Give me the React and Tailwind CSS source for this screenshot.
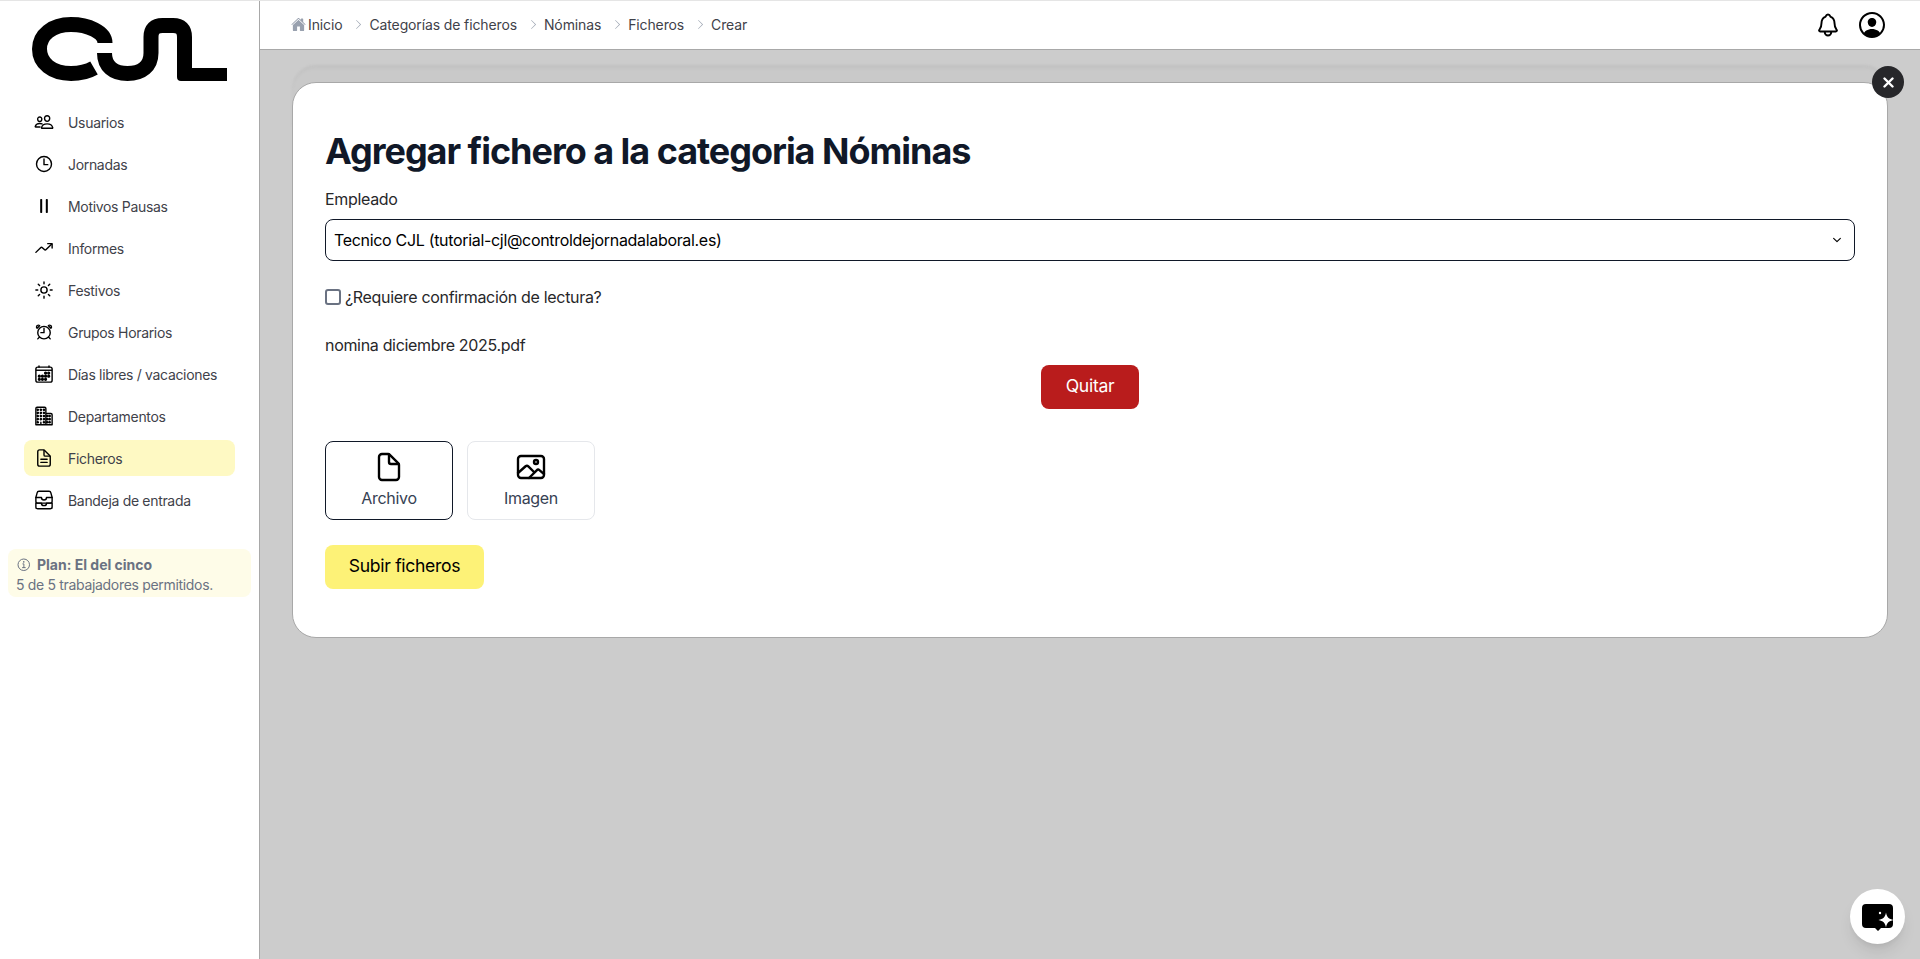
import React from 'react';
import {
  IoAlarmOutline,
  IoBusinessOutline,
  IoCalendarOutline,
  IoChevronDown,
  IoDocumentOutline,
  IoDocumentTextOutline,
  IoFileTrayStackedOutline,
  IoHome,
  IoImageOutline,
  IoInformationCircleOutline,
  IoNotificationsOutline,
  IoPauseOutline,
  IoPeopleOutline,
  IoPersonCircleOutline,
  IoSunnyOutline,
  IoTimeOutline,
  IoTrendingUpOutline,
} from 'react-icons/io5';
import { BsChevronRight } from 'react-icons/bs';

const navItems = [
  { label: 'Usuarios', icon: IoPeopleOutline },
  { label: 'Jornadas', icon: IoTimeOutline },
  { label: 'Motivos Pausas', icon: IoPauseOutline },
  { label: 'Informes', icon: IoTrendingUpOutline },
  { label: 'Festivos', icon: IoSunnyOutline },
  { label: 'Grupos Horarios', icon: IoAlarmOutline },
  { label: 'Días libres / vacaciones', icon: IoCalendarOutline },
  { label: 'Departamentos', icon: IoBusinessOutline },
  { label: 'Ficheros', icon: IoDocumentTextOutline, active: true },
  { label: 'Bandeja de entrada', icon: IoFileTrayStackedOutline },
];

const crumbs = ['Categorías de ficheros', 'Nóminas', 'Ficheros', 'Crear'];

// CJL logo
const Logo = () => (
  <svg width="195" height="65" viewBox="32 17 195 65" fill="none" stroke="#000" strokeWidth="15">
    <path d="M105 43 C105 32 88 24.500 71 24.500 C52 24.500 39.500 35 39.500 49 C39.500 63 52 73.500 71 73.500 C80 73.500 88 71.500 94 68" />
    <path
      d="M104.500 53 C104.500 66 113 73.500 127.500 73.500 C142 73.500 151 66 151 53 V37 Q151 25.500 162.500 25.500 H173 Q184.500 25.500 184.500 37 V60"
      strokeLinejoin="round"
    />
    <path d="M177 58 V77 Q177 81 181 81 H227 V68 H192 V58 Z" fill="#000" stroke="none" />
  </svg>
);

const Sidebar = () => (
  <aside className="w-[260px] shrink-0 bg-white border-r border-[#a8a8a8] flex flex-col">
    <div className="pl-[32px] pt-[16px] h-[100px]">
      <Logo />
    </div>
    <nav className="flex flex-col gap-[6px] pl-[24px] pr-[24px] pt-[3px]">
      {navItems.map(({ label, icon: Icon, active }) => (
        <div
          key={label}
          className={`h-[36px] flex items-center gap-[14px] pl-[10px] rounded-lg text-[14px] text-[#3f424a] ${
            active ? 'bg-[#fef9c3]' : ''
          }`}
        >
          <Icon className="w-[20px] h-[20px] text-black [&_*]:[stroke-width:36px]" />
          <span>{label}</span>
        </div>
      ))}
    </nav>
    <div className="mt-[31px] mx-[8px] w-[243px] h-[48px] rounded-lg bg-[#fefce8] px-[8px] pt-[6px] text-[14px] leading-[20px] text-gray-500">
      <div className="flex items-center gap-[5px] font-bold tracking-normal">
        <IoInformationCircleOutline className="w-[16px] h-[16px]" />
        <span>Plan: El del cinco</span>
      </div>
      <div>5 de 5 trabajadores permitidos.</div>
    </div>
  </aside>
);

const Breadcrumb = () => (
  <div className="flex items-center text-[14px] text-[#3f424a] tracking-[-0.009em] mt-[-2px]">
    <IoHome className="w-[15px] h-[15px] text-gray-400 ml-[-1px] mr-[2px]" />
    <span>Inicio</span>
    {crumbs.map((c) => (
      <React.Fragment key={c}>
        <BsChevronRight className="w-[11px] h-[11px] text-gray-400 ml-[11px] mr-[5px]" />
        <span>{c}</span>
      </React.Fragment>
    ))}
  </div>
);

export default function App() {
  return (
    <div className="h-[959px] overflow-hidden flex flex-col font-['Inter',sans-serif] tracking-[-0.02em] border-t border-[#e5e5e5] bg-white">
      <div className="flex flex-1 min-h-0">
        <Sidebar />
        <div className="flex-1 flex flex-col min-w-0 relative">
          <header className="h-[49px] bg-white border-b border-[#a8a8a8] flex items-center justify-between pl-[32px] pr-[32px]">
            <Breadcrumb />
            <div className="flex items-center gap-[15px]">
              <IoNotificationsOutline className="w-[26px] h-[26px] text-black [&_*]:[stroke-width:38px]" />
              <IoPersonCircleOutline className="w-[32px] h-[32px] text-black" />
            </div>
          </header>

          <main className="flex-1 bg-[#cccccc] pt-[32px] px-[32px]">
            <div className="relative">
              {/* stacked sheet behind the modal */}
              <div className="absolute left-0 right-0 top-[-17px] h-[60px] rounded-t-[24px] bg-[#c9c9c9] shadow-[inset_0_3px_3px_rgba(0,0,0,0.04)] blur-[1px]" />
              <div className="relative bg-white rounded-[24px] border border-[#a8a8a8] h-[556px] px-[32px] pt-[40px]">
                <h1 className="text-[36px] leading-[56px] font-bold text-gray-900 tracking-[-0.0286em]">
                  Agregar fichero a la categoria Nóminas
                </h1>
                <div className="mt-[8px] text-[16px] leading-[24px] text-[#27272a]">Empleado</div>
                <div className="mt-[8px] h-[42px] border border-gray-900 rounded-lg flex items-center justify-between pl-[8px] pr-[11px] text-[16px] text-black">
                  <span>Tecnico CJL (tutorial-cjl@controldejornadalaboral.es)</span>
                  <IoChevronDown className="w-[12px] h-[12px]" />
                </div>
                <label className="mt-[24px] flex items-center gap-[4px] text-[16px] leading-[24px] text-[#27272a]">
                  <span className="w-[16px] h-[16px] border-2 border-gray-500 rounded-[3px] bg-white" />
                  ¿Requiere confirmación de lectura?
                </label>
                <div className="mt-[24px] text-[16px] leading-[24px] text-[#27272a]">nomina diciembre 2025.pdf</div>
                <div className="mt-[8px] flex justify-center">
                  <button className="h-[44px] w-[98px] pb-[1px] rounded-lg bg-[#b91c1c] text-white text-[17.6px]">
                    Quitar
                  </button>
                </div>
                <div className="mt-[32px] flex gap-[14px]">
                  <button className="w-[128px] h-[79px] rounded-lg border border-gray-900 flex flex-col items-center justify-center gap-[3px] text-[16px] leading-[24px] text-gray-700">
                    <IoDocumentOutline className="w-[32px] h-[32px] text-black [&_*]:[stroke-width:38px]" />
                    Archivo
                  </button>
                  <button className="w-[128px] h-[79px] rounded-lg border border-gray-200 flex flex-col items-center justify-center gap-[3px] text-[16px] leading-[24px] text-gray-700">
                    <IoImageOutline className="w-[32px] h-[32px] text-black [&_*]:[stroke-width:38px]" />
                    Imagen
                  </button>
                </div>
                <button className="mt-[25px] h-[44px] w-[159px] pb-[1px] rounded-lg bg-[#fdf277] text-black text-[17.6px]">
                  Subir ficheros
                </button>
              </div>
              <button className="absolute right-[-16px] top-[-16px] w-[32px] h-[32px] rounded-full bg-[#27272a] text-white flex items-center justify-center">
                <svg width="11" height="11" viewBox="0 0 11 11" stroke="currentColor" strokeWidth="2.400" strokeLinecap="round">
                  <path d="M1.500 1.500 L9.500 9.500 M9.500 1.500 L1.500 9.500" />
                </svg>
              </button>
            </div>
          </main>

          {/* chat launcher */}
          <button className="absolute right-[15px] bottom-[15px] w-[55px] h-[55px] rounded-full bg-white shadow-lg flex items-center justify-center">
            <svg width="33" height="28" viewBox="0 0 33 28">
              <path d="M5 1h23a4 4 0 0 1 4 4v16a4 4 0 0 1-4 4h-8l-3 3-3-3H5a4 4 0 0 1-4-4V5a4 4 0 0 1 4-4z" fill="#000" />
              <path d="M25 9.500c.9 4.700 2.800 6.600 7.500 7.500-4.700.9-6.600 2.800-7.500 7.500-.9-4.700-2.800-6.600-7.500-7.500 4.700-.9 6.600-2.800 7.500-7.500z" fill="#fff" />
              <circle cx="19" cy="10" r="1.200" fill="#fff" />
            </svg>
          </button>
        </div>
      </div>
    </div>
  );
}
